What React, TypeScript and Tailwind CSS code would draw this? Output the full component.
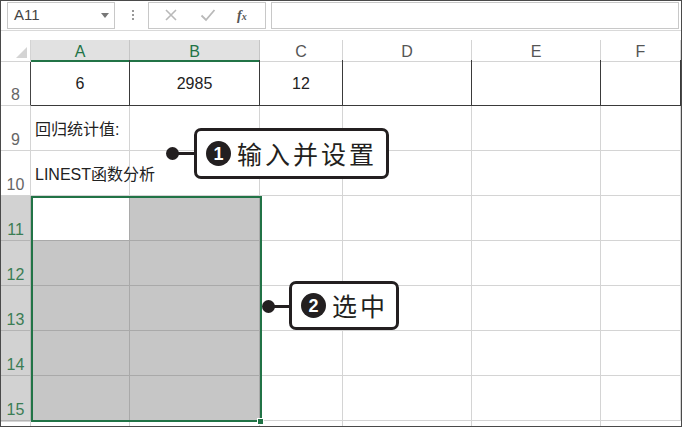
import type { ReactNode } from 'react';

const gridCols = 'grid grid-cols-[30px_99px_130px_83px_129px_129px_80px]';
const rowNums = [9, 10, 11, 12, 13, 14, 15];

function Callout({
  num,
  text,
  className,
}: {
  num: string;
  text: string;
  className: string;
}) {
  return (
    <div
      className={`absolute flex items-center rounded-[7px] border-[3px] border-[#231f20] bg-white pl-[9px] ${className}`}
    >
      <span className="flex h-[25px] w-[25px] items-center justify-center rounded-full bg-[#231f20] font-['Liberation_Sans',sans-serif] text-[18px] font-bold leading-none text-white">
        {num}
      </span>
      <span className="ml-[6px] font-['Noto_Sans_CJK_SC',sans-serif] text-[25px] leading-none tracking-[3px] text-[#231f20]">
        {text}
      </span>
    </div>
  );
}

function RowHead({ n, selected, dark }: { n: number; selected?: boolean; dark?: boolean }) {
  return (
    <div
      className={`flex items-end justify-center border-b border-r pb-[2px] text-[16px] leading-[16px] ${
        selected
          ? 'border-[#b4b4b4] bg-[#d2d2d2] text-[#3b7d54]'
          : `border-b-[#d4d4d4] bg-white text-[#666] ${dark ? 'border-r-[#444]' : 'border-r-[#d4d4d4]'}`
      }`}
    >
      {n}
    </div>
  );
}

function Cell({ children, className = '' }: { children?: ReactNode; className?: string }) {
  return <div className={`flex items-center border-b border-r ${className}`}>{children}</div>;
}

export default function App() {
  return (
    <div className="relative flex h-[427px] w-[682px] flex-col overflow-hidden border border-[#4a4a4a] bg-white font-['Liberation_Sans','Noto_Sans_CJK_SC',sans-serif] text-[#222]">
      {/* formula bar */}
      <div className="flex h-[30px] shrink-0 items-center border-b border-[#d9d9d9] pb-[1px]">
        <div className="ml-[6px] flex h-[27px] w-[108px] items-center border border-[#c8c8c8] pl-[6px] pr-[5px]">
          <span className="text-[15px] text-[#444]">A11</span>
          <span className="ml-auto h-0 w-0 border-x-[4px] border-t-[5px] border-x-transparent border-t-[#777]" />
        </div>
        <div className="ml-[13px] flex w-[10px] flex-col items-center gap-[2px]">
          <span className="h-[2px] w-[2px] bg-[#999]" />
          <span className="h-[2px] w-[2px] bg-[#999]" />
          <span className="h-[2px] w-[2px] bg-[#999]" />
        </div>
        <div className="ml-[10px] flex h-[27px] w-[118px] items-center border border-[#c8c8c8]">
          <svg width="14" height="14" viewBox="0 0 14 14" className="ml-[15px]">
            <path d="M2 2 L12 12 M12 2 L2 12" stroke="#b9b9b9" strokeWidth="1.6" fill="none" />
          </svg>
          <svg width="16" height="14" viewBox="0 0 16 14" className="ml-[22px]">
            <path d="M1.5 7.5 L6 12 L14.5 2" stroke="#b9b9b9" strokeWidth="1.8" fill="none" />
          </svg>
          <span className="ml-[21px] font-['Liberation_Serif',serif] text-[14px] font-bold italic text-[#555]">
            f<span className="text-[10px]">x</span>
          </span>
        </div>
        <div className="ml-[5px] h-[27px] w-[408px] border border-[#c8c8c8]" />
      </div>
      <div className="h-[9px] shrink-0" />

      {/* column header */}
      <div className={`${gridCols} h-[20px] shrink-0 text-[16px] leading-[17px]`}>
        <div className="relative border-b border-r border-[#d4d4d4] bg-white">
          <span className="absolute bottom-[3px] right-[3px] h-0 w-0 border-b-[11px] border-l-[11px] border-b-[#d4d4d4] border-l-transparent" />
        </div>
        <div className="flex justify-center border-b-2 border-r border-b-[#217346] border-r-[#c6c6c6] bg-[#e1e1e1] pt-[3px] text-[#217346]">A</div>
        <div className="flex justify-center border-b-2 border-r border-b-[#217346] border-r-[#c6c6c6] bg-[#e1e1e1] pt-[3px] text-[#217346]">B</div>
        {['C', 'D', 'E', 'F'].map((c) => (
          <div key={c} className="flex justify-center border-b border-r border-[#d4d4d4] pt-[3px] text-[#555]">
            {c}
          </div>
        ))}
      </div>

      {/* row 8 */}
      <div className={`${gridCols} h-[46px] shrink-0 text-[16px]`}>
        <RowHead n={8} dark />
        <Cell className="justify-center border-[#3a3a3a] pt-[3px]">6</Cell>
        <Cell className="justify-center border-[#3a3a3a] pt-[3px]">2985</Cell>
        <Cell className="justify-center border-[#3a3a3a] pt-[3px]">12</Cell>
        <Cell className="border-[#3a3a3a]" />
        <Cell className="border-[#3a3a3a]" />
        <Cell className="border-[#3a3a3a]" />
      </div>

      {/* rows 9-15 */}
      {rowNums.map((n) => {
        const sel = n >= 11;
        return (
          <div key={n} className={`${gridCols} h-[45px] shrink-0 text-[16px]`}>
            <RowHead n={n} selected={sel} />
            <Cell
              className={`pl-[4px] pt-[3px] ${
                sel && n !== 11 ? 'border-[#a9a9a9] bg-[#c6c6c6]' : sel ? 'border-[#a9a9a9] bg-white' : 'border-[#d4d4d4]'
              } ${n === 9 || n === 10 ? 'overflow-visible whitespace-nowrap' : ''}`}
            >
              {n === 9 ? '回归统计值:' : n === 10 ? 'LINEST函数分析' : null}
            </Cell>
            <Cell className={sel ? 'border-[#a9a9a9] bg-[#c6c6c6]' : 'border-[#d4d4d4]'} />
            <Cell className="border-[#d4d4d4]" />
            <Cell className="border-[#d4d4d4]" />
            <Cell className="border-[#d4d4d4]" />
            <Cell className="border-[#d4d4d4]" />
          </div>
        );
      })}

      {/* partial row 16 */}
      <div className={`${gridCols} min-h-0 flex-1`}>
        <div className="border-r border-t border-[#d4d4d4]" />
        <div className="border-r border-[#d4d4d4]" />
        <div className="border-r border-[#d4d4d4]" />
        <div className="border-r border-[#d4d4d4]" />
        <div className="border-r border-[#d4d4d4]" />
        <div className="border-r border-[#d4d4d4]" />
        <div />
      </div>

      {/* selection frame and fill handle */}
      <div className="pointer-events-none absolute left-[30px] top-[195px] h-[226px] w-[231px] border-2 border-[#217346]" />
      <div className="absolute left-[256px] top-[417px] h-[7px] w-[7px] border border-white bg-[#217346]" />

      {/* callout 1 */}
      <div className="absolute left-[165px] top-[146px] h-[13px] w-[13px] rounded-full bg-[#231f20]" />
      <div className="absolute left-[171px] top-[151px] h-[3px] w-[23px] bg-[#231f20]" />
      <Callout num="1" text="输入并设置" className="left-[193px] top-[127px] h-[51px] pr-[9px]" />

      {/* callout 2 */}
      <div className="absolute left-[261px] top-[299px] h-[13px] w-[13px] rounded-full bg-[#231f20]" />
      <div className="absolute left-[267px] top-[304px] h-[3px] w-[22px] bg-[#231f20]" />
      <Callout num="2" text="选中" className="left-[288px] top-[280px] h-[49px] pr-[8px]" />
    </div>
  );
}
